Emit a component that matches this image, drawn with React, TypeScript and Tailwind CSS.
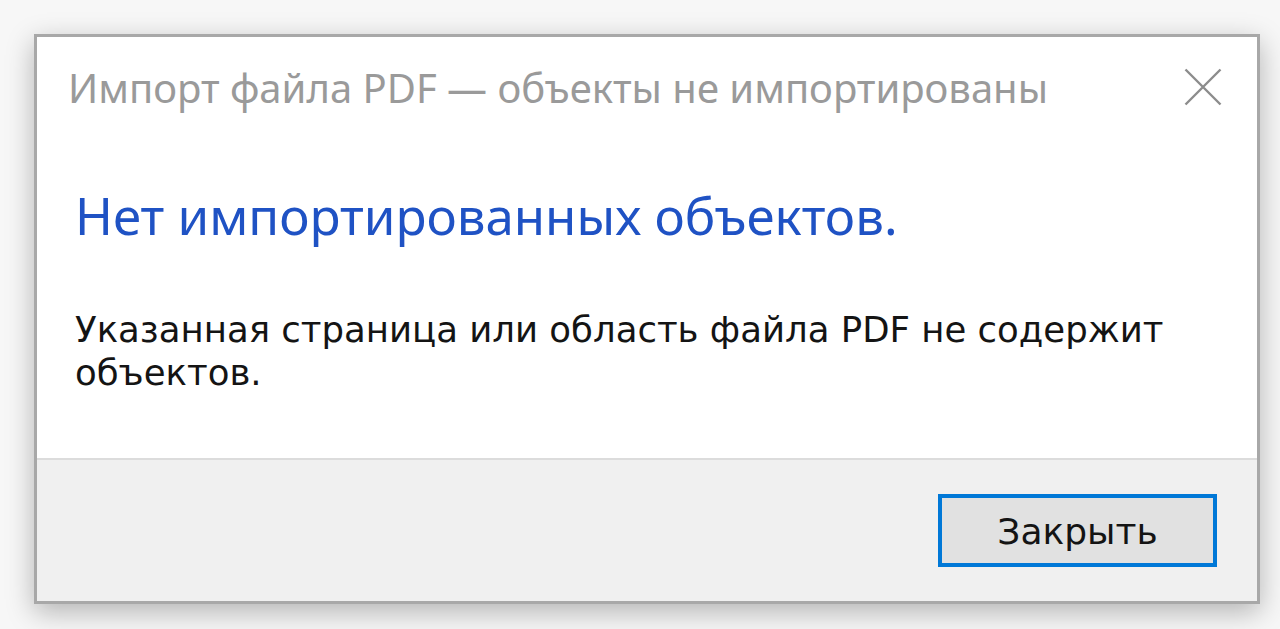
export default function App() {
  return (
    <div className="h-[629px] w-[1280px] bg-[#f7f7f7] pl-[34px] pt-[34px]">
      <div className="flex h-[570px] w-[1226px] flex-col border-[3px] border-[#a8a8a8] bg-white shadow-[0_8px_26px_rgba(0,0,0,0.28)]">
        <div className="flex h-[110px] items-start justify-between pl-[31px] pr-[35px] pt-[27px]">
          <span className="font-['Noto_Sans',sans-serif] text-[40px] leading-[48px] text-[#9a9a9a]">
            Импорт файла PDF — объекты не импортированы
          </span>
          <svg width="38" height="38" viewBox="0 0 38 38" className="mt-[4px] text-[#8c8c8c]">
            <path d="M1.5 1.5 L36.5 36.5 M36.5 1.5 L1.5 36.5" stroke="currentColor" strokeWidth="2.4" fill="none" />
          </svg>
        </div>
        <div className="flex flex-1 flex-col pl-[38px] pr-[60px]">
          <h1 className="mt-[38px] font-['Noto_Sans',sans-serif] text-[51px] leading-[60px] text-[#1f52c4]">
            Нет импортированных объектов.
          </h1>
          <p className="mt-[63px] font-['DejaVu_Sans',sans-serif] text-[35.5px] leading-[43px] text-[#141414]">
            Указанная страница или область файла PDF не содержит объектов.
          </p>
        </div>
        <div className="flex h-[143px] items-center justify-end border-t-[2px] border-[#dcdcdc] bg-[#f0f0f0] pr-[40px]">
          <button
            type="button"
            className="h-[73px] w-[279px] border-[4px] border-[#0078d7] bg-[#e1e1e1] pt-[2px] font-['DejaVu_Sans',sans-serif] text-[36px] text-[#141414]"
          >
            Закрыть
          </button>
        </div>
      </div>
    </div>
  );
}
